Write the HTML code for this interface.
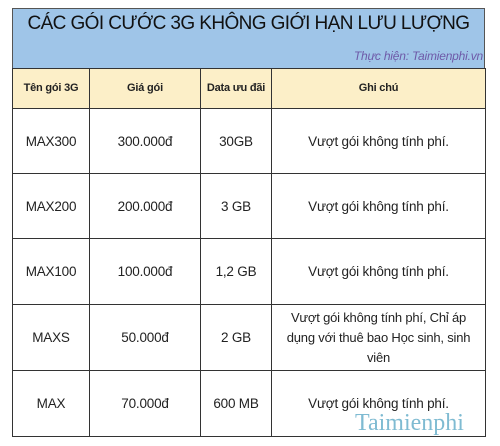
<!DOCTYPE html>
<html><head><meta charset="utf-8"><style>
body{margin:0;width:500px;height:446px;background:#fff;font-family:"Liberation Sans",sans-serif;position:relative;overflow:hidden;color:#222}
.band{position:absolute;left:12px;top:8px;width:473px;height:61px;background:#9fc5e8;border:1px solid #555;border-bottom:none;box-sizing:border-box}
.title{position:absolute;left:12px;width:473px;top:13px;text-align:center;font-size:19px;color:#111;letter-spacing:-0.6px;white-space:nowrap}
.by{position:absolute;right:17px;top:49px;font-size:12px;font-style:italic;color:#6e5aa8;letter-spacing:-0.2px}
table{position:absolute;left:12px;top:68px;border-collapse:collapse;width:474px;table-layout:fixed}
td{border:1.5px solid #333;text-align:center;font-size:13.5px;padding:0;line-height:19px;letter-spacing:-0.2px}
tr.h td{background:#fcefc8;font-weight:bold;font-size:11px;height:39px}
.logo{position:absolute;left:355px;top:410px;font-family:"Liberation Serif",serif;font-size:24px;color:#4a9fbf;opacity:.7}
</style></head><body>
<div class="band"></div>
<div class="title">CÁC GÓI CƯỚC 3G KHÔNG GIỚI HẠN LƯU LƯỢNG</div>
<div class="by">Thực hiện: Taimienphi.vn</div>
<table>
<colgroup><col style="width:77px"><col style="width:111px"><col style="width:71px"><col></colgroup>
<tr class="h"><td>Tên gói 3G</td><td>Giá gói</td><td>Data ưu đãi</td><td>Ghi chú</td></tr>
<tr style="height:65px"><td>MAX300</td><td>300.000đ</td><td>30GB</td><td>Vượt gói không tính phí.</td></tr>
<tr style="height:65px"><td>MAX200</td><td>200.000đ</td><td>3 GB</td><td>Vượt gói không tính phí.</td></tr>
<tr style="height:66px"><td>MAX100</td><td>100.000đ</td><td>1,2 GB</td><td>Vượt gói không tính phí.</td></tr>
<tr style="height:66px"><td>MAXS</td><td>50.000đ</td><td>2 GB</td><td style="line-height:20px;font-size:13px;padding:0 12px">Vượt gói không tính phí, Chỉ áp dụng với thuê bao Học sinh, sinh viên</td></tr>
<tr style="height:66px"><td>MAX</td><td>70.000đ</td><td>600 MB</td><td>Vượt gói không tính phí.</td></tr>
</table>
<div class="logo">Taimienphi</div>
</body></html>
